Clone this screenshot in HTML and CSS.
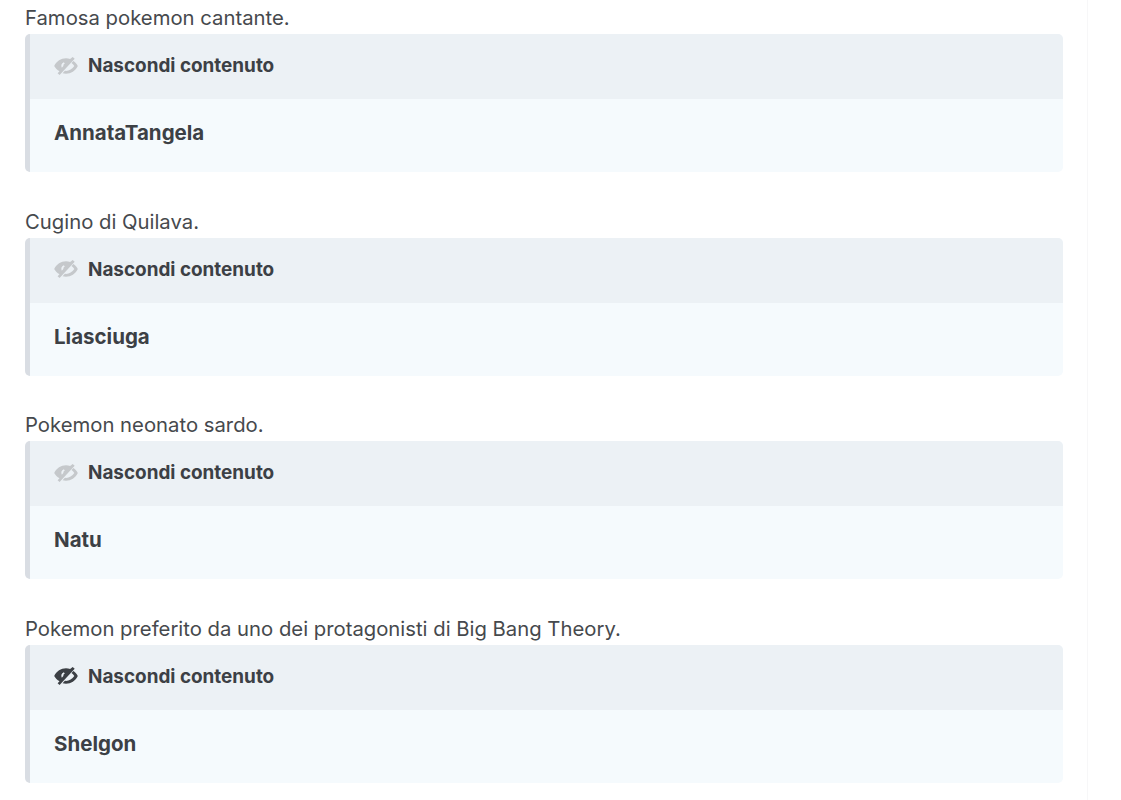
FILE: index.html
```html
<!DOCTYPE html>
<html lang="it">
<head>
  <meta charset="UTF-8">
  <meta name="viewport" content="width=device-width, initial-scale=1.0">
  <title>Indovinelli Pokemon</title>
  <link rel="stylesheet" href="styles.css">
</head>
<body>
  <svg class="icon-defs" width="0" height="0" aria-hidden="true">
    <symbol id="eye-slash" viewBox="0 0 24 18">
      <path fill-rule="evenodd" d="M.2 9C2.500 4.200 7 1.300 12 1.300c1.400 0 2.800.2 4.100.7L18.700 0l2 1.700L5.600 18l-2-1.700 1.900-2.100C3.200 12.900 1.400 11.100.2 9zM9.800 5.200A4.400 4.400 0 0 0 7.800 10.800l1.500-1.700a2.700 2.700 0 0 1 1.500-2.700z"/>
      <path fill-rule="evenodd" d="M19.400 3.900c1.900 1.200 3.400 3 4.400 5.100-2.300 4.800-6.800 7.700-11.800 7.700-1.200 0-2.300-.2-3.400-.5l2.300-2.400c.4.100.8.100 1.100.1 3.300 0 6.300-1.800 8.300-4.900-.8-1.100-1.700-2.100-2.800-2.900z"/>
    </symbol>
  </svg>

  <main class="content">
    <div class="riddle">
      <p class="question">Famosa pokemon cantante.</p>
      <div class="spoiler">
        <div class="spoiler-head">
          <svg class="eye"><use href="#eye-slash"></use></svg>
          <span>Nascondi contenuto</span>
        </div>
        <div class="spoiler-body">AnnataTangela</div>
      </div>
    </div>

    <div class="riddle">
      <p class="question">Cugino di Quilava.</p>
      <div class="spoiler">
        <div class="spoiler-head">
          <svg class="eye"><use href="#eye-slash"></use></svg>
          <span>Nascondi contenuto</span>
        </div>
        <div class="spoiler-body">Liasciuga</div>
      </div>
    </div>

    <div class="riddle">
      <p class="question">Pokemon neonato sardo.</p>
      <div class="spoiler">
        <div class="spoiler-head">
          <svg class="eye"><use href="#eye-slash"></use></svg>
          <span>Nascondi contenuto</span>
        </div>
        <div class="spoiler-body">Natu</div>
      </div>
    </div>

    <div class="riddle">
      <p class="question">Pokemon preferito da uno dei protagonisti di Big Bang Theory.</p>
      <div class="spoiler">
        <div class="spoiler-head">
          <svg class="eye eye-active"><use href="#eye-slash"></use></svg>
          <span>Nascondi contenuto</span>
        </div>
        <div class="spoiler-body">Shelgon</div>
      </div>
    </div>
  </main>
</body>
</html>
```

FILE: styles.css
```css
* { box-sizing: border-box; margin: 0; padding: 0; font-family: 'Inter', sans-serif; }
body {
  background-color: #fff;
  color: #46494d;
  overflow: hidden;
}
.icon-defs {
  display: block;
  height: 0;
}
.content {
  width: 1088px;
  height: 800px;
  padding: 3px 24px 0 25px;
  border-right: 1px solid #f7f7f8;
}
.riddle {
  margin-bottom: 34.67px;
}
.question {
  font-size: 20.3px;
  line-height: 30.5px;
}
.spoiler {
  height: 138px;
  margin-top: 0.5px;
  border-left: 5.5px solid #d9dde3;
  border-radius: 5px;
  overflow: hidden;
  background-color: #f5fafd;
  font-weight: 700;
  font-size: 20.5px;
  color: #3c4045;
}
.spoiler-head {
  display: flex;
  align-items: center;
  gap: 10px;
  height: 65px;
  padding: 0 0 2px 24px;
  font-size: 18.9px;
  background-color: #ecf1f5;
}
.eye {
  width: 24px;
  height: 18px;
  fill: #c5c8cb;
}
.eye-active {
  fill: #3c4045;
}
.spoiler-body {
  padding-left: 24px;
  line-height: 68px;
}
```
